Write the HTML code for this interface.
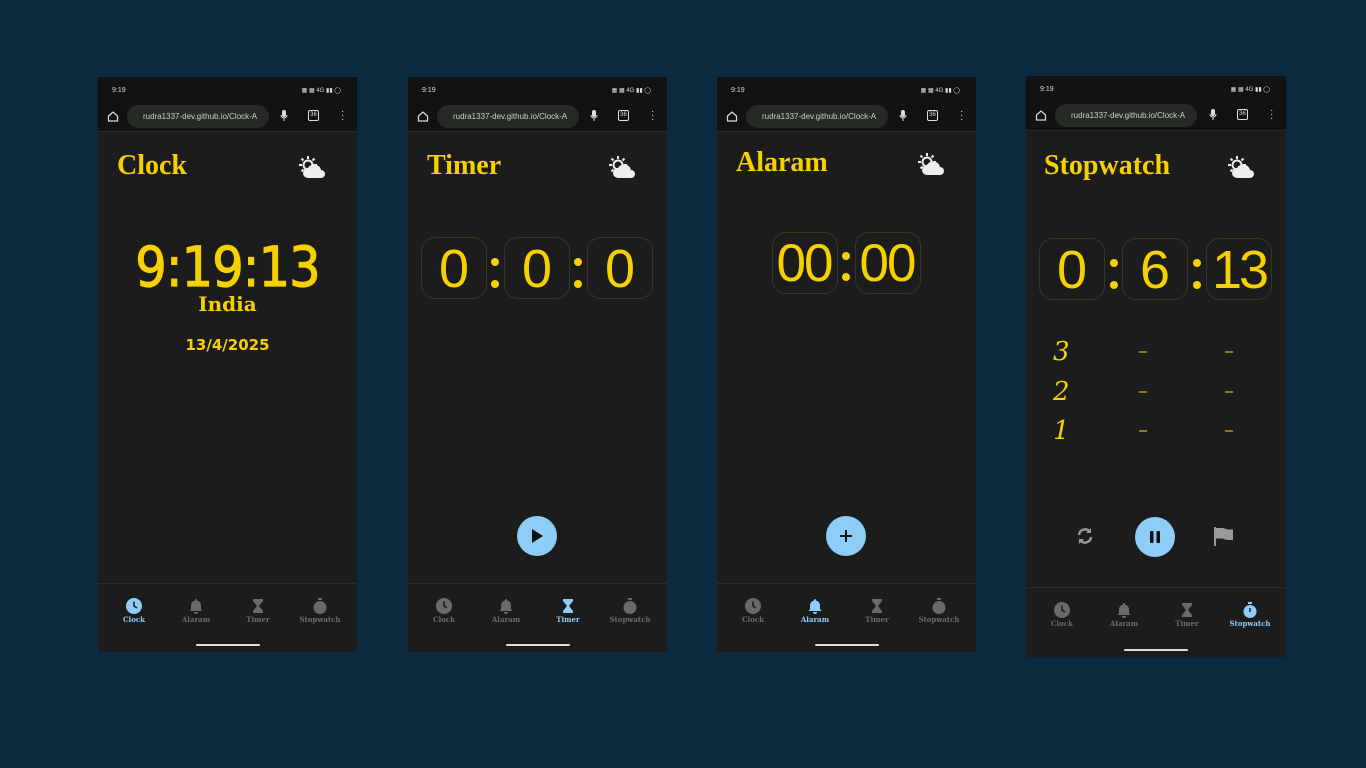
<!DOCTYPE html>
<html><head><meta charset="utf-8"><style>
*{margin:0;padding:0;box-sizing:border-box}
body{width:1366px;height:768px;background:#0c2a3f;position:relative;overflow:hidden;font-family:"Liberation Sans",sans-serif}
.ph{position:absolute;width:259px;height:575px;background:#1c1c1c;overflow:hidden}
.top{position:absolute;left:0;top:0;width:100%;height:55px;background:#121212;border-bottom:1px solid #2a2a2a}
.st{position:absolute;left:14px;top:10px;font-size:7px;color:#ddd}
.sr{position:absolute;right:16px;top:10px;font-size:6px;color:#ddd}
.url{position:absolute;left:29px;top:28px;width:142px;height:23px;border-radius:12px;background:#252a25;color:#ccc;font-size:8px;line-height:23px;padding-left:16px;white-space:nowrap;overflow:hidden}
.ic{position:absolute}
.title{position:absolute;left:19px;top:73px;font-family:"Liberation Serif",serif;font-weight:bold;font-size:28px;color:#f7d000}
.box{position:absolute;width:66px;height:62px;border:1px solid #3a3520;border-radius:14px;color:#f7d000;font-size:54px;text-align:center;line-height:62px;font-family:"Liberation Sans",sans-serif;font-weight:normal;overflow:hidden}
.col{position:absolute;width:8px}
.col i{position:absolute;left:0;width:8px;height:8px;border-radius:50%;background:#f7d000}
.btn{position:absolute;width:40px;height:40px;border-radius:50%;background:#8ecdf8}
.navd{position:absolute;left:0;width:100%;border-top:1px solid #2a2a2a}
.nv{position:absolute;width:62px;text-align:center;font-family:"DejaVu Serif",serif;font-size:7px;color:#6a6a6a;font-weight:bold}
.nv.a{color:#8ecdf8}
.nv svg{display:block;margin:0 auto 1px}
.bar{position:absolute;left:98px;width:64px;height:2px;background:#ddd;border-radius:1px}
.ds{position:absolute;width:8px;height:1.5px;background:#8a7a20}
</style></head><body>

<!-- PHONE 1 -->
<div class="ph" style="left:98px;top:77px">
 <div class="top"><div class="st">9:19</div><div class="sr">▦ ▦ 4G ▮▮ ◯</div>
 <svg class="ic" style="left:9px;top:33px" width="12" height="12" viewBox="0 0 12 12"><path d="M1.5 6L6 2l4.5 4v5h-9z" fill="none" stroke="#ddd" stroke-width="1.2"/></svg>
 <div class="url">rudra1337-dev.github.io/Clock-A</div>
 <svg class="ic" style="left:182px;top:33px" width="8" height="12" viewBox="0 0 8 12"><rect x="2" y="0" width="4" height="7" rx="2" fill="#ddd"/><path d="M1 5a3 3 0 006 0M4 8v3" stroke="#ddd" fill="none"/></svg>
 <div class="ic" style="left:210px;top:33px;width:11px;height:11px;border:1.3px solid #ddd;border-radius:2px;font-size:6px;color:#ddd;text-align:center;line-height:9px">36</div>
 <div class="ic" style="left:243px;top:33px;font-size:10px;color:#ddd;line-height:4px">·<br>·<br>·</div></div>
 <div class="title">Clock</div>
 <svg class="ic" style="left:201px;top:79px" width="28" height="24" viewBox="0 0 28 24"><circle cx="9" cy="9" r="4.5" fill="none" stroke="#eee" stroke-width="2"/><g stroke="#eee" stroke-width="2"><path d="M9 0v3M9 15v3M0 9h3M15 9h3M2.5 2.5l2 2M13.5 13.5l2 2M2.5 15.5l2-2M13.5 4.5l2-2"/></g><path d="M9 22a5 5 0 010-10 7 7 0 0113 2 4 4 0 010 8z" fill="#eee"/></svg>
 <div style="position:absolute;left:0;width:100%;top:162px;text-align:center;white-space:nowrap"><span style="display:inline-block;transform:scaleX(0.9);font-family:'DejaVu Sans',sans-serif;font-size:55px;font-weight:normal;color:#f7d000;line-height:56px;-webkit-text-stroke:1.2px #f7d000;letter-spacing:-1px">9:19:13</span></div>
 <div style="position:absolute;left:0;width:100%;top:215px;text-align:center;font-family:'DejaVu Serif',serif;font-size:20px;font-weight:bold;color:#f7d000">India</div>
 <div style="position:absolute;left:0;width:100%;top:259px;text-align:center;font-family:'DejaVu Sans',sans-serif;font-size:15px;font-weight:bold;color:#f7d000">13/4/2025</div>
 <div class="navd" style="top:506px"></div>
 <div class="nv a" style="left:5px;top:521px"><svg width="16" height="16" viewBox="0 0 16 16"><circle cx="8" cy="8" r="8" fill="#8ecdf8"/><path d="M8 3.5V8l3 2" stroke="#1c1c1c" stroke-width="1.6" fill="none"/></svg>Clock</div>
 <div class="nv" style="left:67px;top:521px"><svg width="16" height="16" viewBox="0 0 16 16"><path d="M8 1a1 1 0 011 1v.5a5 5 0 014 5V11l1.5 2h-13L3 11V7.5a5 5 0 014-5V2a1 1 0 011-1zM6 14h4a2 2 0 01-4 0z" fill="#6a6a6a"/></svg>Alaram</div>
 <div class="nv" style="left:129px;top:521px"><svg width="16" height="16" viewBox="0 0 16 16"><path d="M3 1h10v2l-4 5 4 5v2H3v-2l4-5-4-5z" fill="#6a6a6a"/></svg>Timer</div>
 <div class="nv" style="left:191px;top:521px"><svg width="16" height="16" viewBox="0 0 16 16"><rect x="6" y="0" width="4" height="2" fill="#6a6a6a"/><circle cx="8" cy="9.5" r="6.5" fill="#6a6a6a"/></svg>Stopwatch</div>
 <div class="bar" style="top:567px"></div>
</div>

<!-- PHONE 2 -->
<div class="ph" style="left:408px;top:77px">
 <div class="top"><div class="st">9:19</div><div class="sr">▦ ▦ 4G ▮▮ ◯</div>
 <svg class="ic" style="left:9px;top:33px" width="12" height="12" viewBox="0 0 12 12"><path d="M1.5 6L6 2l4.5 4v5h-9z" fill="none" stroke="#ddd" stroke-width="1.2"/></svg>
 <div class="url">rudra1337-dev.github.io/Clock-A</div>
 <svg class="ic" style="left:182px;top:33px" width="8" height="12" viewBox="0 0 8 12"><rect x="2" y="0" width="4" height="7" rx="2" fill="#ddd"/><path d="M1 5a3 3 0 006 0M4 8v3" stroke="#ddd" fill="none"/></svg>
 <div class="ic" style="left:210px;top:33px;width:11px;height:11px;border:1.3px solid #ddd;border-radius:2px;font-size:6px;color:#ddd;text-align:center;line-height:9px">36</div>
 <div class="ic" style="left:243px;top:33px;font-size:10px;color:#ddd;line-height:4px">·<br>·<br>·</div></div>
 <div class="title">Timer</div>
 <svg class="ic" style="left:201px;top:79px" width="28" height="24" viewBox="0 0 28 24"><circle cx="9" cy="9" r="4.5" fill="none" stroke="#eee" stroke-width="2"/><g stroke="#eee" stroke-width="2"><path d="M9 0v3M9 15v3M0 9h3M15 9h3M2.5 2.5l2 2M13.5 13.5l2 2M2.5 15.5l2-2M13.5 4.5l2-2"/></g><path d="M9 22a5 5 0 010-10 7 7 0 0113 2 4 4 0 010 8z" fill="#eee"/></svg>
 <div class="box" style="left:13px;top:160px">0</div>
 <div class="col" style="left:83px;top:160px"><i style="top:21px"></i><i style="top:43px"></i></div>
 <div class="box" style="left:96px;top:160px">0</div>
 <div class="col" style="left:166px;top:160px"><i style="top:21px"></i><i style="top:43px"></i></div>
 <div class="box" style="left:179px;top:160px">0</div>
 <div class="btn" style="left:109px;top:439px"><svg width="40" height="40" viewBox="0 0 40 40"><path d="M15 13l11 7-11 7z" fill="#111"/></svg></div>
 <div class="navd" style="top:506px"></div>
 <div class="nv" style="left:5px;top:521px"><svg width="16" height="16" viewBox="0 0 16 16"><circle cx="8" cy="8" r="8" fill="#6a6a6a"/><path d="M8 3.5V8l3 2" stroke="#1c1c1c" stroke-width="1.6" fill="none"/></svg>Clock</div>
 <div class="nv" style="left:67px;top:521px"><svg width="16" height="16" viewBox="0 0 16 16"><path d="M8 1a1 1 0 011 1v.5a5 5 0 014 5V11l1.5 2h-13L3 11V7.5a5 5 0 014-5V2a1 1 0 011-1zM6 14h4a2 2 0 01-4 0z" fill="#6a6a6a"/></svg>Alaram</div>
 <div class="nv a" style="left:129px;top:521px"><svg width="16" height="16" viewBox="0 0 16 16"><path d="M3 1h10v2l-4 5 4 5v2H3v-2l4-5-4-5z" fill="#8ecdf8"/></svg>Timer</div>
 <div class="nv" style="left:191px;top:521px"><svg width="16" height="16" viewBox="0 0 16 16"><rect x="6" y="0" width="4" height="2" fill="#6a6a6a"/><circle cx="8" cy="9.5" r="6.5" fill="#6a6a6a"/></svg>Stopwatch</div>
 <div class="bar" style="top:567px"></div>
</div>

<!-- PHONE 3 -->
<div class="ph" style="left:717px;top:77px">
 <div class="top"><div class="st">9:19</div><div class="sr">▦ ▦ 4G ▮▮ ◯</div>
 <svg class="ic" style="left:9px;top:33px" width="12" height="12" viewBox="0 0 12 12"><path d="M1.5 6L6 2l4.5 4v5h-9z" fill="none" stroke="#ddd" stroke-width="1.2"/></svg>
 <div class="url">rudra1337-dev.github.io/Clock-A</div>
 <svg class="ic" style="left:182px;top:33px" width="8" height="12" viewBox="0 0 8 12"><rect x="2" y="0" width="4" height="7" rx="2" fill="#ddd"/><path d="M1 5a3 3 0 006 0M4 8v3" stroke="#ddd" fill="none"/></svg>
 <div class="ic" style="left:210px;top:33px;width:11px;height:11px;border:1.3px solid #ddd;border-radius:2px;font-size:6px;color:#ddd;text-align:center;line-height:9px">36</div>
 <div class="ic" style="left:243px;top:33px;font-size:10px;color:#ddd;line-height:4px">·<br>·<br>·</div></div>
 <div class="title" style="top:70px">Alaram</div>
 <svg class="ic" style="left:201px;top:76px" width="28" height="24" viewBox="0 0 28 24"><circle cx="9" cy="9" r="4.5" fill="none" stroke="#eee" stroke-width="2"/><g stroke="#eee" stroke-width="2"><path d="M9 0v3M9 15v3M0 9h3M15 9h3M2.5 2.5l2 2M13.5 13.5l2 2M2.5 15.5l2-2M13.5 4.5l2-2"/></g><path d="M9 22a5 5 0 010-10 7 7 0 0113 2 4 4 0 010 8z" fill="#eee"/></svg>
 <div class="box" style="left:55px;top:155px;font-size:53px;letter-spacing:-2px;text-indent:-2px">00</div>
 <div class="col" style="left:125px;top:155px"><i style="top:20px"></i><i style="top:41px"></i></div>
 <div class="box" style="left:138px;top:155px;font-size:53px;letter-spacing:-2px;text-indent:-2px">00</div>
 <div class="btn" style="left:109px;top:439px"><svg width="40" height="40" viewBox="0 0 40 40"><path d="M20 14v12M14 20h12" stroke="#111" stroke-width="2"/></svg></div>
 <div class="navd" style="top:506px"></div>
 <div class="nv" style="left:5px;top:521px"><svg width="16" height="16" viewBox="0 0 16 16"><circle cx="8" cy="8" r="8" fill="#6a6a6a"/><path d="M8 3.5V8l3 2" stroke="#1c1c1c" stroke-width="1.6" fill="none"/></svg>Clock</div>
 <div class="nv a" style="left:67px;top:521px"><svg width="16" height="16" viewBox="0 0 16 16"><path d="M8 1a1 1 0 011 1v.5a5 5 0 014 5V11l1.5 2h-13L3 11V7.5a5 5 0 014-5V2a1 1 0 011-1zM6 14h4a2 2 0 01-4 0z" fill="#8ecdf8"/></svg>Alaram</div>
 <div class="nv" style="left:129px;top:521px"><svg width="16" height="16" viewBox="0 0 16 16"><path d="M3 1h10v2l-4 5 4 5v2H3v-2l4-5-4-5z" fill="#6a6a6a"/></svg>Timer</div>
 <div class="nv" style="left:191px;top:521px"><svg width="16" height="16" viewBox="0 0 16 16"><rect x="6" y="0" width="4" height="2" fill="#6a6a6a"/><circle cx="8" cy="9.5" r="6.5" fill="#6a6a6a"/></svg>Stopwatch</div>
 <div class="bar" style="top:567px"></div>
</div>

<!-- PHONE 4 -->
<div class="ph" style="left:1026px;top:76px;width:260px;height:581px">
 <div class="top"><div class="st">9:19</div><div class="sr">▦ ▦ 4G ▮▮ ◯</div>
 <svg class="ic" style="left:9px;top:33px" width="12" height="12" viewBox="0 0 12 12"><path d="M1.5 6L6 2l4.5 4v5h-9z" fill="none" stroke="#ddd" stroke-width="1.2"/></svg>
 <div class="url">rudra1337-dev.github.io/Clock-A</div>
 <svg class="ic" style="left:183px;top:33px" width="8" height="12" viewBox="0 0 8 12"><rect x="2" y="0" width="4" height="7" rx="2" fill="#ddd"/><path d="M1 5a3 3 0 006 0M4 8v3" stroke="#ddd" fill="none"/></svg>
 <div class="ic" style="left:211px;top:33px;width:11px;height:11px;border:1.3px solid #ddd;border-radius:2px;font-size:6px;color:#ddd;text-align:center;line-height:9px">36</div>
 <div class="ic" style="left:244px;top:33px;font-size:10px;color:#ddd;line-height:4px">·<br>·<br>·</div></div>
 <div class="title" style="left:18px;top:74px">Stopwatch</div>
 <svg class="ic" style="left:202px;top:80px" width="28" height="24" viewBox="0 0 28 24"><circle cx="9" cy="9" r="4.5" fill="none" stroke="#eee" stroke-width="2"/><g stroke="#eee" stroke-width="2"><path d="M9 0v3M9 15v3M0 9h3M15 9h3M2.5 2.5l2 2M13.5 13.5l2 2M2.5 15.5l2-2M13.5 4.5l2-2"/></g><path d="M9 22a5 5 0 010-10 7 7 0 0113 2 4 4 0 010 8z" fill="#eee"/></svg>
 <div class="box" style="left:13px;top:162px">0</div>
 <div class="col" style="left:84px;top:162px"><i style="top:21px"></i><i style="top:43px"></i></div>
 <div class="box" style="left:96px;top:162px">6</div>
 <div class="col" style="left:167px;top:162px"><i style="top:21px"></i><i style="top:43px"></i></div>
 <div class="box" style="left:180px;top:162px;letter-spacing:-3px">13</div>
 <div style="position:absolute;left:27px;top:257px;font-family:'DejaVu Serif',serif;font-style:italic;font-size:26px;color:#f7d000;line-height:39.5px">3<br>2<br>1</div>
 <div class="ds" style="left:113px;top:275px"></div><div class="ds" style="left:199px;top:275px"></div>
 <div class="ds" style="left:113px;top:315px"></div><div class="ds" style="left:199px;top:315px"></div>
 <div class="ds" style="left:113px;top:354px"></div><div class="ds" style="left:199px;top:354px"></div>
 <svg class="ic" style="left:50px;top:451px" width="18" height="18" viewBox="0 0 18 18"><path d="M3 8a6 6 0 0110.5-3.5M15 10a6 6 0 01-10.5 3.5" stroke="#9a9a9a" stroke-width="2.4" fill="none"/><path d="M15 1v5h-5zM3 17v-5h5z" fill="#9a9a9a"/></svg>
 <div class="btn" style="left:109px;top:441px"><svg width="40" height="40" viewBox="0 0 40 40"><rect x="15" y="14" width="3.5" height="12" rx="1" fill="#111"/><rect x="21.5" y="14" width="3.5" height="12" rx="1" fill="#111"/></svg></div>
 <svg class="ic" style="left:188px;top:451px" width="20" height="19" viewBox="0 0 20 19"><rect x="0" y="0" width="2" height="19" fill="#9a9a9a"/><path d="M2 1h6c3 0 4 1.5 7 1.5h4V13h-5c-3 0-4-1.5-6-1.5H2z" fill="#9a9a9a"/></svg>
 <div class="navd" style="top:511px"></div>
 <div class="nv" style="left:5px;top:526px"><svg width="16" height="16" viewBox="0 0 16 16"><circle cx="8" cy="8" r="8" fill="#6a6a6a"/><path d="M8 3.5V8l3 2" stroke="#1c1c1c" stroke-width="1.6" fill="none"/></svg>Clock</div>
 <div class="nv" style="left:67px;top:526px"><svg width="16" height="16" viewBox="0 0 16 16"><path d="M8 1a1 1 0 011 1v.5a5 5 0 014 5V11l1.5 2h-13L3 11V7.5a5 5 0 014-5V2a1 1 0 011-1zM6 14h4a2 2 0 01-4 0z" fill="#6a6a6a"/></svg>Alaram</div>
 <div class="nv" style="left:130px;top:526px"><svg width="16" height="16" viewBox="0 0 16 16"><path d="M3 1h10v2l-4 5 4 5v2H3v-2l4-5-4-5z" fill="#6a6a6a"/></svg>Timer</div>
 <div class="nv a" style="left:193px;top:526px"><svg width="16" height="16" viewBox="0 0 16 16"><rect x="6" y="0" width="4" height="2" fill="#8ecdf8"/><circle cx="8" cy="9.5" r="6.5" fill="#8ecdf8"/><path d="M8 6v4" stroke="#1c1c1c" stroke-width="1.5"/></svg>Stopwatch</div>
 <div class="bar" style="top:573px;left:98px"></div>
</div>
</body></html>
